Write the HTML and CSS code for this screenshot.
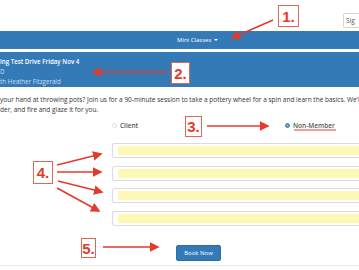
FILE: index.html
```html
<!DOCTYPE html>
<html lang="en">
<head>
    <meta charset="UTF-8">
    <meta name="viewport" content="width=device-width, initial-scale=1.0">
    <title>Mini Classes - Booking</title>
    <link rel="stylesheet" href="styles.css">
</head>
<body>
    <div class="page">
        <header class="topbar">
            <button class="btn-sign" type="button">Sig</button>
        </header>

        <nav class="navbar">
            <span class="nav-item">Mini Classes <span class="caret"></span></span>
        </nav>

        <div class="panel-heading">
            <div class="class-title">ing Test Drive Friday Nov 4</div>
            <div class="class-meta">D</div>
            <div class="class-meta">th Heather Fitzgerald</div>
        </div>

        <p class="class-desc">
            <span class="line">your hand at throwing pots? Join us for a 90-minute session to take a pottery wheel for a spin and learn the basics. We'll</span>
            <span class="line">der, and fire and glaze it for you.</span>
        </p>

        <form class="booking">
            <div class="radios">
                <label class="radio"><span class="radio-dot"></span>Client</label>
                <label class="radio"><span class="radio-dot checked"></span><span class="marked">Non-Member</span></label>
            </div>
            <input class="field" type="text">
            <input class="field" type="text">
            <input class="field" type="text">
            <input class="field" type="email">
            <div class="actions">
                <button class="btn-book" type="button">Book Now</button>
            </div>
        </form>

        <div class="rule"></div>

        <!-- annotation overlay -->
        <div class="note note-1">1.</div>
        <div class="note note-2">2.</div>
        <div class="note note-3">3.</div>
        <div class="note note-4">4.</div>
        <div class="note note-5">5.</div>
        <svg class="arrows" width="359" height="270" viewBox="0 0 359 270">
            <defs>
                <marker id="head" markerWidth="6" markerHeight="6" refX="5" refY="3" orient="auto" markerUnits="strokeWidth">
                    <path d="M0,0 L6,3 L0,6 Z" fill="#e43a2a"/>
                </marker>
            </defs>
            <g stroke="#e43a2a" stroke-width="1.6" fill="none">
                <line x1="273" y1="20" x2="232" y2="38" marker-end="url(#head)"/>
                <line x1="168" y1="72" x2="93" y2="72" marker-end="url(#head)"/>
                <line x1="207" y1="126" x2="268" y2="126" marker-end="url(#head)"/>
                <line x1="57" y1="165" x2="101" y2="154" marker-end="url(#head)"/>
                <line x1="57" y1="172" x2="101" y2="172" marker-end="url(#head)"/>
                <line x1="58" y1="181" x2="102" y2="192" marker-end="url(#head)"/>
                <line x1="57" y1="188" x2="99" y2="211" marker-end="url(#head)"/>
                <line x1="103" y1="247" x2="158" y2="247" marker-end="url(#head)"/>
                <line x1="294" y1="130" x2="336" y2="130" stroke-width="1"/>
            </g>
        </svg>
    </div>
</body>
</html>
```

FILE: styles.css
```css
:root {
    --brand: #337ab7;
    --text: #333333;
    --muted: #cfdff0;
    --border: #dcdcdc;
    --autofill: #fdf8b6;
    --mark: #e43a2a;
}

* {
    box-sizing: border-box;
    margin: 0;
    padding: 0;
}

body {
    font-family: 'Open Sans', 'Liberation Sans', sans-serif;
    color: var(--text);
    background: #fff;
}

.page {
    position: relative;
    width: 359px;
    height: 270px;
    overflow: hidden;
}

.topbar {
    height: 31px;
    padding: 6px 0 0 343px;
}

.btn-sign {
    width: 16px;
    height: 15px;
    border: 1px solid #d6d6d6;
    border-right: none;
    border-radius: 2px 0 0 2px;
    background: #fff;
    font-family: inherit;
    font-size: 6.5px;
    color: #555;
    text-align: left;
    padding-left: 2px;
    white-space: nowrap;
}

.navbar {
    height: 18px;
    background: var(--brand);
    padding-left: 177px;
    display: flex;
    align-items: center;
}

.nav-item {
    color: #fff;
    font-size: 6px;
    white-space: nowrap;
}

.caret {
    display: inline-block;
    width: 0;
    height: 0;
    margin-left: 1px;
    vertical-align: middle;
    border-top: 2px solid #fff;
    border-left: 2px solid transparent;
    border-right: 2px solid transparent;
}

.panel-heading {
    margin-top: 3px;
    height: 35px;
    background: var(--brand);
    padding-top: 5px;
    font-size: 6.2px;
    line-height: 10px;
    white-space: nowrap;
}

.class-title {
    color: #fff;
    font-weight: 600;
}

.class-meta {
    color: var(--muted);
}

.class-desc {
    margin-top: 8px;
    font-size: 6.5px;
    line-height: 10px;
    white-space: nowrap;
}

.class-desc .line {
    display: block;
}

.booking {
    padding-left: 112px;
}

.radios {
    margin-top: 5px;
    display: grid;
    grid-template-columns: 173px 1fr;
    height: 10px;
    font-size: 6.5px;
    font-weight: 600;
    color: #555;
}

.radio {
    display: flex;
    align-items: center;
    gap: 3px;
}

.radio-dot {
    width: 5px;
    height: 5px;
    border-radius: 50%;
    border: 1px solid #ddd;
    background: #fff;
}

.radio-dot.checked {
    border: 1.5px solid var(--brand);
    background: #fff;
    box-shadow: inset 0 0 0 1px var(--brand);
}

.field {
    display: block;
    width: 260px;
    height: 15px;
    margin-top: 7.5px;
    border: 1px solid var(--border);
    border-radius: 2px;
    padding: 2px 0 2px 5px;
    background-color: var(--autofill);
    background-clip: content-box;
}

.radios + .field {
    margin-top: 13px;
}

.actions {
    margin-top: 12.5px;
    padding-left: 64px;
}

.btn-book {
    width: 45px;
    height: 16px;
    border: 1px solid #2e6da4;
    border-radius: 2px;
    background: var(--brand);
    color: #fff;
    font-family: inherit;
    font-size: 6px;
}

.rule {
    margin-top: 4px;
    height: 1px;
    background: #e8e8e8;
}

/* annotation overlay */
.note {
    position: absolute;
    border: 1.5px solid #e06756;
    background: #fff;
    color: var(--mark);
    font-family: 'Liberation Sans', Arial, sans-serif;
    font-weight: bold;
    font-size: 15px;
    line-height: 1;
    display: flex;
    align-items: center;
    justify-content: center;
}

.note-1 { left: 278px; top: 5px;   width: 21px; height: 22px; }
.note-2 { left: 171px; top: 62px;  width: 19px; height: 22px; }
.note-3 { left: 185px; top: 116px; width: 17px; height: 21px; }
.note-4 { left: 33px;  top: 161px; width: 20px; height: 23px; }
.note-5 { left: 81px;  top: 238px; width: 15px; height: 20px; }

.arrows {
    position: absolute;
    left: 0;
    top: 0;
}
```
